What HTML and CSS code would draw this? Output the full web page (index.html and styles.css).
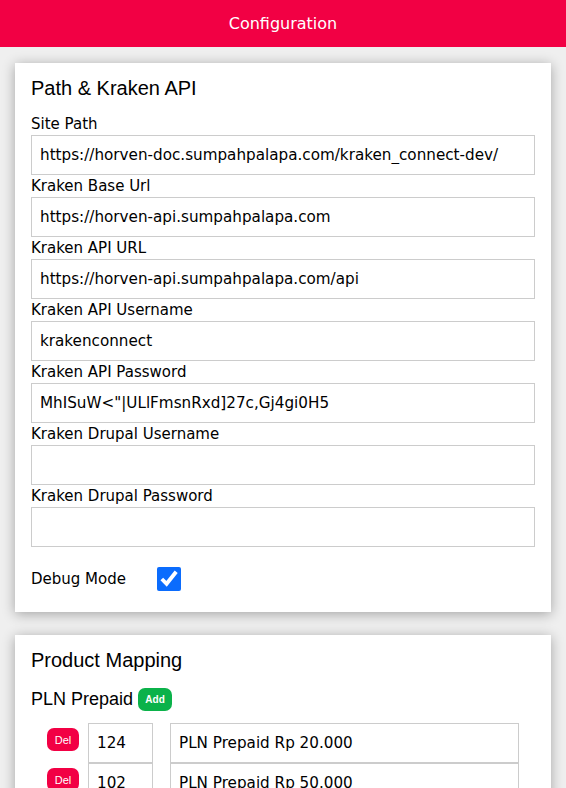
FILE: index.html
```html
<!DOCTYPE html>
<html>
<head>
<meta charset="utf-8">
<link rel="stylesheet" href="styles.css">
</head>
<body>
<header class="topbar">Configuration</header>
<main class="content">
  <section class="card">
    <h2 class="card-title">Path &amp; Kraken API</h2>
    <label class="field-label">Site Path</label>
    <input class="field" type="text" value="https://horven-doc.sumpahpalapa.com/kraken_connect-dev/">
    <label class="field-label">Kraken Base Url</label>
    <input class="field" type="text" value="https://horven-api.sumpahpalapa.com">
    <label class="field-label">Kraken API URL</label>
    <input class="field" type="text" value="https://horven-api.sumpahpalapa.com/api">
    <label class="field-label">Kraken API Username</label>
    <input class="field" type="text" value="krakenconnect">
    <label class="field-label">Kraken API Password</label>
    <input class="field" type="text" value="MhISuW&lt;&quot;|ULlFmsnRxd]27c,Gj4gi0H5">
    <label class="field-label">Kraken Drupal Username</label>
    <input class="field" type="text" value="">
    <label class="field-label">Kraken Drupal Password</label>
    <input class="field" type="text" value="">
    <div class="debug-row">
      <span class="debug-label">Debug Mode</span>
      <input class="check" type="checkbox" checked>
    </div>
  </section>
  <section class="card">
    <h2 class="card-title">Product Mapping</h2>
    <div class="group-head">
      <span class="group-title">PLN Prepaid</span>
      <button class="btn btn-add">Add</button>
    </div>
    <div class="map-row">
      <button class="btn btn-del">Del</button>
      <input class="field code" type="text" value="124">
      <input class="field name" type="text" value="PLN Prepaid Rp 20.000">
    </div>
    <div class="map-row">
      <button class="btn btn-del">Del</button>
      <input class="field code" type="text" value="102">
      <input class="field name" type="text" value="PLN Prepaid Rp 50.000">
    </div>
  </section>
</main>
</body>
</html>
```

FILE: styles.css
```css
* { box-sizing: border-box; }
html, body { margin: 0; padding: 0; }
body {
  background: #efefef;
  font-family: "DejaVu Sans", Verdana, sans-serif;
  color: #000;
  overflow: hidden;
}
.topbar {
  height: 47px;
  background: #f20044;
  color: #fff;
  font-family: "DejaVu Sans", sans-serif;
  font-size: 16px;
  display: flex;
  align-items: center;
  justify-content: center;
  padding-bottom: 1px;
}
.content {
  padding: 16px 15px;
  display: flex;
  flex-direction: column;
  gap: 23px;
}
.card {
  background: #fff;
  box-shadow: 0 2px 12px rgba(0,0,0,0.32);
  padding: 12px 16px 21px 16px;
  display: flex;
  flex-direction: column;
}
.card-title {
  margin: 0 0 12px 0;
  font-family: "Liberation Sans", Arial, sans-serif;
  font-weight: normal;
  font-size: 20px;
  line-height: 26px;
}
.field-label {
  font-size: 15px;
  line-height: 22px;
}
.field {
  height: 40px;
  border: 1px solid #cccccc;
  border-radius: 0;
  padding: 0 8px;
  font-family: "DejaVu Sans", sans-serif;
  font-size: 15.2px;
  color: #000;
  outline: none;
  background: #fff;
  width: 100%;
}
.debug-row {
  margin-top: 20px;
  display: flex;
  align-items: center;
  height: 24px;
}
.debug-label {
  width: 126px;
  font-size: 15px;
}
.check {
  margin: 0;
  width: 24px;
  height: 24px;
  accent-color: #0b6cfd;
}
.group-head {
  display: flex;
  align-items: center;
  gap: 5px;
  height: 28px;
  margin-bottom: 10px;
}
.group-title {
  font-family: "Liberation Sans", Arial, sans-serif;
  font-size: 18px;
}
.btn {
  border: none;
  color: #fff;
  font-family: "Liberation Sans", Arial, sans-serif;
  font-size: 11px;
  padding: 0;
  height: 23px;
  border-radius: 7px;
}
.btn-add {
  background: #0bb24a;
  width: 34px;
  font-weight: bold;
  font-size: 10px;
}
.map-row {
  display: flex;
  align-items: flex-start;
  padding-left: 16px;
}
.btn-del {
  background: #f20044;
  width: 32px;
  margin-top: 5px;
  margin-right: 9px;
}
.field.code {
  width: 65px;
  flex: none;
  margin-right: 17px;
}
.field.name {
  width: 349px;
  flex: none;
}
```
